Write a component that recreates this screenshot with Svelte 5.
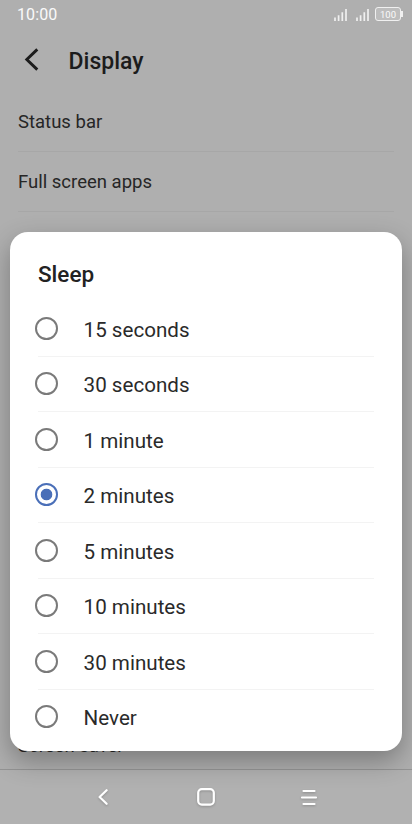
<script lang="ts">
  const settings = ['Status bar', 'Full screen apps'];

  const options = [
    '15 seconds',
    '30 seconds',
    '1 minute',
    '2 minutes',
    '5 minutes',
    '10 minutes',
    '30 minutes',
    'Never'
  ];

  let selected = $state('2 minutes');
</script>

<div class="phone">
  <div class="status-bar">
    <span class="clock">10:00</span>
    <div class="indicators">
      {#each [0, 1] as sim (sim)}
        <svg class="signal" width="14" height="12" viewBox="0 0 14 12">
          <path d="M2 8.5V12M5.6 6.2V12M9.3 3.2V12M13 0v12" />
        </svg>
      {/each}
      <div class="battery">100</div>
    </div>
  </div>

  <header class="header">
    <svg class="back" width="16" height="24" viewBox="0 0 16 24">
      <path d="M13.3 1.4 2.8 11.5 13.3 21.6" />
    </svg>
    <h1>Display</h1>
  </header>

  <main class="settings">
    {#each settings as setting (setting)}
      <div class="setting">{setting}</div>
    {/each}
    <div class="setting last">Screen saver</div>
  </main>

  <nav class="nav-bar">
    <svg width="24" height="24" viewBox="0 0 24 24">
      <path d="M15.6 5.2 8.6 12l7 6.8" />
    </svg>
    <svg width="24" height="24" viewBox="0 0 24 24">
      <rect x="4.2" y="4.2" width="15.6" height="15.4" rx="3.6" />
    </svg>
    <svg width="24" height="24" viewBox="0 0 24 24">
      <path d="M6.5 6h11M5 12.5h14M6.5 19h11" />
    </svg>
  </nav>

  <div class="dialog" role="dialog" aria-label="Sleep">
    <h2>Sleep</h2>
    <div class="options">
      {#each options as option (option)}
        <label class="option">
          <input type="radio" name="sleep" value={option} bind:group={selected} />
          <span>{option}</span>
        </label>
      {/each}
    </div>
  </div>
</div>

<style>
  :global(body) {
    margin: 0;
  }

  .phone {
    position: relative;
    display: flex;
    flex-direction: column;
    width: 412px;
    height: 824px;
    overflow: hidden;
    background: #afafaf;
    color: #1c1c1c;
    font-family: Roboto, sans-serif;
  }

  .status-bar {
    display: flex;
    align-items: center;
    justify-content: space-between;
    box-sizing: border-box;
    height: 29px;
    padding: 0 8px 0 17px;
    color: #fafafa;
  }

  .clock {
    font-size: 16px;
    letter-spacing: 0.1px;
  }

  .indicators {
    display: flex;
    align-items: center;
    gap: 8px;
  }

  .signal {
    margin-top: 1px;
    fill: none;
    stroke: #f0f0f0;
    stroke-width: 1.7;
  }

  .battery {
    position: relative;
    box-sizing: border-box;
    width: 26px;
    height: 14px;
    margin: -1px 3px 0 -2px;
    border: 1.5px solid #f0f0f0;
    border-radius: 3px;
    background: #bdbdbd;
    font-size: 9.5px;
    line-height: 13px;
    text-align: center;
  }

  .battery::after {
    content: '';
    position: absolute;
    top: 3px;
    right: -3px;
    width: 2px;
    height: 6px;
    background: #f0f0f0;
  }

  .header {
    display: flex;
    align-items: center;
    gap: 28.5px;
    height: 63px;
    padding-left: 24px;
  }

  .back {
    margin-top: -1px;
    fill: none;
    stroke: #1c1c1c;
    stroke-width: 2.9;
  }

  h1 {
    margin: 1px 0 0;
    font-size: 23px;
    font-weight: 500;
  }

  .settings {
    display: flex;
    flex: 1;
    flex-direction: column;
    padding: 0 18px;
  }

  .setting {
    box-sizing: border-box;
    height: 60px;
    border-bottom: 1px solid #a7a7a7;
    color: #262626;
    font-size: 18.5px;
    line-height: 60px;
  }

  .last {
    height: 53px;
    margin-top: auto;
    border-bottom: 0;
  }

  .nav-bar {
    display: flex;
    align-items: center;
    justify-content: center;
    gap: 79px;
    box-sizing: border-box;
    height: 55px;
    border-top: 1px solid #949494;
    background: #b1b1b1;
  }

  .nav-bar svg {
    fill: none;
    stroke: #fff;
    stroke-width: 2.2;
    stroke-linecap: round;
    stroke-linejoin: round;
    filter: drop-shadow(0 1px 1px rgba(0, 0, 0, 0.2));
  }

  .dialog {
    position: absolute;
    top: 232.4px;
    right: 10.4px;
    left: 10.4px;
    box-sizing: border-box;
    height: 518.3px;
    padding: 25.6px 27.6px 5px;
    border-radius: 18px;
    background: #fff;
    box-shadow: 0 10px 26px rgba(0, 0, 0, 0.3);
  }

  h2 {
    height: 43.3px;
    margin: 0;
    color: #222;
    font-size: 22.5px;
    font-weight: 500;
    line-height: 33px;
  }

  .option {
    display: flex;
    align-items: center;
    gap: 25.6px;
    box-sizing: border-box;
    height: 55.5px;
    border-bottom: 1px solid #f3f3f3;
    color: #2a2a2a;
    font-size: 20.6px;
  }

  .option span {
    margin-top: 2px;
  }

  .option:last-child {
    height: 54.5px;
    border-bottom: 0;
  }

  input {
    appearance: none;
    box-sizing: border-box;
    width: 23px;
    height: 23px;
    margin: -1px 0 0 -3px;
    border: 2px solid #7a7a7a;
    border-radius: 50%;
  }

  input:checked {
    border-color: #4a6fb8;
    background: radial-gradient(circle, #4a6fb8 5.4px, transparent 6.2px);
  }
</style>
